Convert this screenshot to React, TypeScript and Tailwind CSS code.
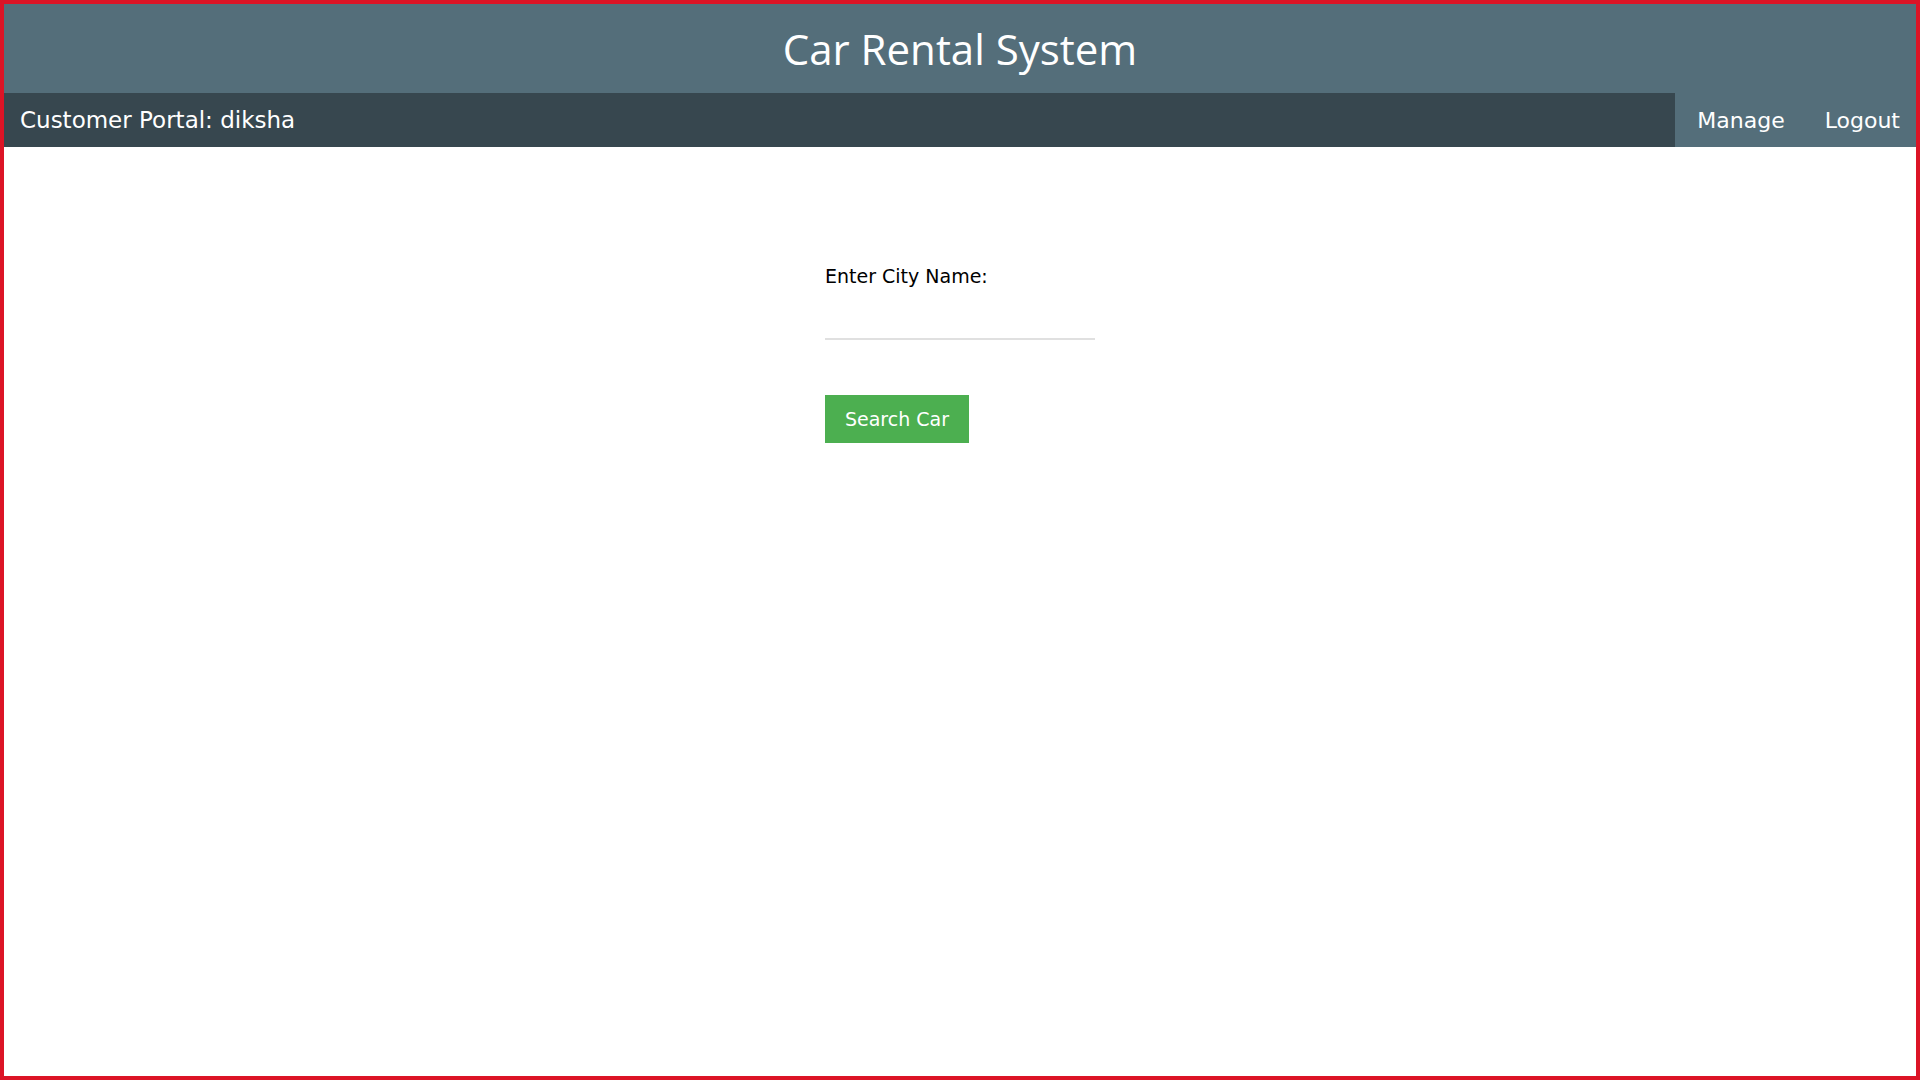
import { useState } from "react";

export default function App() {
  const [city, setCity] = useState("");

  return (
    <div className="min-h-screen border-4 border-[#dc1426] bg-white">
      <header className="h-[89px] bg-[#546e7a] flex items-center justify-center">
        <h1 className="text-white text-[42px] font-['Open_Sans',sans-serif] leading-none">Car Rental System</h1>
      </header>

      <nav className="h-[54px] flex font-['DejaVu_Sans',Verdana,sans-serif] text-white">
        <div className="flex-1 bg-[#37474f] flex items-center px-[16px] text-[23px]">
          Customer Portal: diksha
        </div>
        <div className="bg-[#546e7a] flex items-center text-[22px]">
          <a href="#" className="pl-[22px] pr-[20px] h-full flex items-center">Manage</a>
          <a href="#" className="pl-[20px] pr-[16px] h-full flex items-center">Logout</a>
        </div>
      </nav>

      <main className="flex justify-center pt-[118px] font-['DejaVu_Sans',Verdana,sans-serif]">
        <form className="w-[270px] flex flex-col" onSubmit={(e) => e.preventDefault()}>
          <label className="text-[19px] leading-[22px] text-black">Enter City Name:</label>
          <input
            value={city}
            onChange={(e) => setCity(e.target.value)}
            className="mt-[17px] h-[36px] border-b-2 border-[#e0e0e0] outline-none text-[18px]"
          />
          <button type="submit" className="mt-[55px] w-[144px] h-[48px] bg-[#4caf50] text-white text-[19px]">
            Search Car
          </button>
        </form>
      </main>
    </div>
  );
}
